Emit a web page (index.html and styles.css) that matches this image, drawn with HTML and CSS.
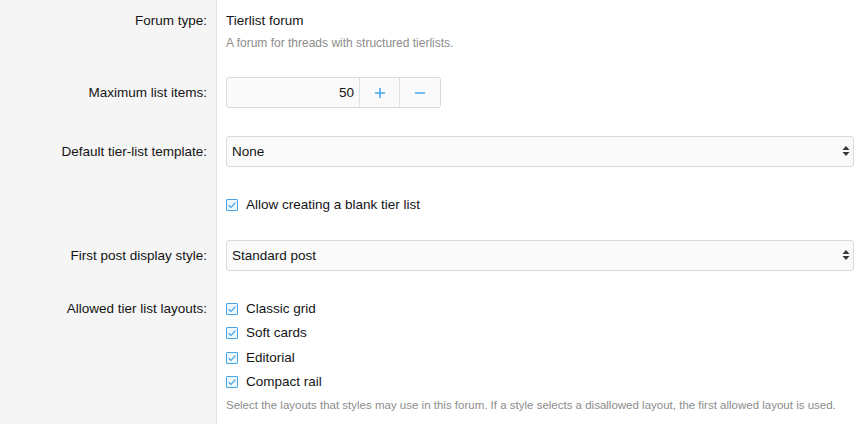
FILE: index.html
```html
<!DOCTYPE html>
<html lang="en">
<head>
<meta charset="utf-8">
<title>Forum options</title>
<link rel="stylesheet" href="styles.css">
</head>
<body>
<div class="form">
  <div class="row row-first">
    <div class="label label-text">Forum type:</div>
    <div class="field">
      <div class="value">Tierlist forum</div>
      <div class="explain">A forum for threads with structured tierlists.</div>
    </div>
  </div>

  <div class="row row-input">
    <div class="label label-control">Maximum list items:</div>
    <div class="field">
      <div class="spinbox">
        <input class="spin-input" type="text" value="50">
        <button class="spin-btn" type="button" aria-label="Increase">
          <svg width="12" height="12" viewBox="0 0 12 12"><path d="M6 1v10M1 6h10" stroke="#47a7eb" stroke-width="1.6" fill="none"/></svg>
        </button>
        <button class="spin-btn" type="button" aria-label="Decrease">
          <svg width="12" height="12" viewBox="0 0 12 12"><path d="M1 6h10" stroke="#47a7eb" stroke-width="1.6" fill="none"/></svg>
        </button>
      </div>
    </div>
  </div>

  <div class="row row-input">
    <div class="label label-control">Default tier-list template:</div>
    <div class="field">
      <div class="select-wrap">
        <select class="select"><option>None</option></select>
        <span class="select-arrow"><svg width="8" height="12" viewBox="0 0 8 12"><path d="M4 1L7.5 5H0.5Z M4 11L7.5 7H0.5Z" fill="#333"/></svg></span>
      </div>
    </div>
  </div>

  <div class="row row-check">
    <div class="label"></div>
    <div class="field">
      <label class="check"><span class="box"><svg width="10" height="10" viewBox="0 0 10 10"><path d="M1.6 5.2L4 7.4L8.4 2.6" stroke="#47a7eb" stroke-width="1.3" fill="none"/></svg></span>Allow creating a blank tier list</label>
    </div>
  </div>

  <div class="row row-input">
    <div class="label label-control">First post display style:</div>
    <div class="field">
      <div class="select-wrap">
        <select class="select"><option>Standard post</option></select>
        <span class="select-arrow"><svg width="8" height="12" viewBox="0 0 8 12"><path d="M4 1L7.5 5H0.5Z M4 11L7.5 7H0.5Z" fill="#333"/></svg></span>
      </div>
    </div>
  </div>

  <div class="row row-list">
    <div class="label label-list">Allowed tier list layouts:</div>
    <div class="field">
      <div class="checklist">
        <label class="check"><span class="box"><svg width="10" height="10" viewBox="0 0 10 10"><path d="M1.6 5.2L4 7.4L8.4 2.6" stroke="#47a7eb" stroke-width="1.3" fill="none"/></svg></span>Classic grid</label>
        <label class="check"><span class="box"><svg width="10" height="10" viewBox="0 0 10 10"><path d="M1.6 5.2L4 7.4L8.4 2.6" stroke="#47a7eb" stroke-width="1.3" fill="none"/></svg></span>Soft cards</label>
        <label class="check"><span class="box"><svg width="10" height="10" viewBox="0 0 10 10"><path d="M1.6 5.2L4 7.4L8.4 2.6" stroke="#47a7eb" stroke-width="1.3" fill="none"/></svg></span>Editorial</label>
        <label class="check"><span class="box"><svg width="10" height="10" viewBox="0 0 10 10"><path d="M1.6 5.2L4 7.4L8.4 2.6" stroke="#47a7eb" stroke-width="1.3" fill="none"/></svg></span>Compact rail</label>
      </div>
      <div class="explain explain-list">Select the layouts that styles may use in this forum. If a style selects a disallowed layout, the first allowed layout is used.</div>
    </div>
  </div>
</div>
</body>
</html>
```

FILE: styles.css
```css
* { box-sizing: border-box; }
html, body { margin: 0; padding: 0; }
body {
  background: #fff;
  color: #141414;
  font-family: "Liberation Sans", Arial, sans-serif;
  font-size: 13.5px;
  line-height: 20px;
  width: 862px;
  height: 424px;
  overflow: hidden;
}
.form {
  display: flex;
  flex-direction: column;
  min-height: 424px;
  background: linear-gradient(to right, #f5f5f5 0, #f5f5f5 216px, #e3e3e3 216px, #e3e3e3 217px, #fff 217px);
}
.row {
  display: flex;
  padding: 14px 0;
}
.row-first { padding: 11px 0 11px; }
.row-check { padding: 15px 0 12px; }
.row-list { padding: 15px 0 8px; }
.label {
  width: 217px;
  flex: none;
  text-align: right;
  padding-right: 10px;
  line-height: 20px;
}
.label-control { padding-top: 5.5px; }
.label-list { line-height: 18px; }
.field {
  flex: 1;
  padding-left: 9px;
  padding-right: 8px;
  min-width: 0;
}
.value { line-height: 20px; }
.explain {
  color: #8c8c8c;
  font-size: 12px;
  line-height: 18px;
  margin-top: 3px;
}
.explain-list {
  margin-top: 5px;
  font-size: 11.5px;
  white-space: nowrap;
}

.spinbox {
  display: flex;
  width: 215px;
  height: 31px;
  border: 1px solid #dadada;
  border-radius: 3px;
  background: #fafafa;
  overflow: hidden;
}
.spin-input {
  flex: 1;
  min-width: 0;
  border: 0;
  background: transparent;
  font: inherit;
  color: #141414;
  text-align: right;
  padding: 0 5px;
  outline: none;
}
.spin-btn {
  width: 40px;
  flex: none;
  border: 0;
  border-left: 1px solid #e0e0e0;
  background: #fafafa;
  display: flex;
  align-items: center;
  justify-content: center;
  padding: 0;
}
.spin-btn + .spin-btn { width: 41px; }

.select-wrap { position: relative; }
.select {
  -webkit-appearance: none;
  appearance: none;
  display: block;
  width: 100%;
  height: 31px;
  border: 1px solid #dadada;
  border-radius: 3px;
  background: #fafafa;
  font: inherit;
  color: #141414;
  padding: 0 24px 0 5px;
  outline: none;
}
.select-arrow {
  position: absolute;
  right: 4px;
  top: 9px;
  width: 8px;
  height: 12px;
  display: flex;
  pointer-events: none;
}

.check {
  display: flex;
  align-items: center;
  line-height: 18px;
}
.box {
  width: 12px;
  height: 12px;
  border: 1px solid #47a7eb;
  background: #eef7fd;
  border-radius: 1px;
  margin-right: 8px;
  display: flex;
  align-items: center;
  justify-content: center;
  flex: none;
}
.checklist {
  display: flex;
  flex-direction: column;
  gap: 6.33px;
}
```
